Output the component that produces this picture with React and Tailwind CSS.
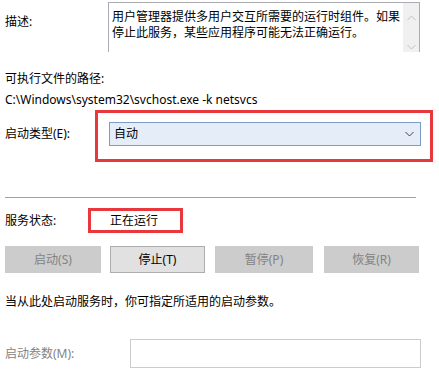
import React from "react";

const font = { fontFamily: '"Noto Sans", "Noto Sans CJK SC", sans-serif' };

function Chevron({ up, className }) {
  return (
    <svg width="9" height="6" viewBox="0 0 9 6" className={className}>
      <path
        d={up ? "M0.5 5 L4.5 1 L8.5 5" : "M0.5 1 L4.5 5 L8.5 1"}
        fill="none"
        stroke="currentColor"
        strokeWidth="1"
      />
    </svg>
  );
}

function Btn({ label, enabled, w, ml }) {
  return (
    <div
      className={`h-[27px] flex items-center justify-center border ${
        enabled
          ? "bg-[#e1e1e1] border-[#adadad] text-black"
          : "bg-[#cccccc] border-[#cccccc] text-[#838383]"
      } ${w} ${ml}`}
    >
      {label}
    </div>
  );
}

export default function App() {
  return (
    <div
      className="w-[439px] h-[373px] bg-white overflow-hidden text-[12px] leading-[16px] text-black flex flex-col"
      style={font}
    >
      {/* description */}
      <div className="flex pt-[2px] h-[52px]">
        <div className="w-[108px] pl-[5px] pt-[12px]">描述:</div>
        <div className="w-[312px] h-[50px] border-t border-l border-r border-[#abadb3] flex">
          <div className="flex-1 pl-[3px] pt-[6px] text-[12px] leading-[16px] tracking-[0px]">
            用户管理器提供多用户交互所需要的运行时组件。如果
            <br />
            停止此服务，某些应用程序可能无法正确运行。
          </div>
          <div className="w-[16px] bg-[#f0f0f0] flex flex-col items-center text-[#c2c2c2]">
            <Chevron up className="mt-[12px]" />
            <Chevron className="mt-[23px]" />
          </div>
        </div>
      </div>

      <div className="mt-[19px] pl-[5px]">可执行文件的路径:</div>
      <div className="mt-[5px] pl-[5px]">C:\Windows\system32\svchost.exe -k netsvcs</div>

      {/* startup type */}
      <div className="mt-[2px] flex">
        <div className="w-[95px] pl-[5px] pt-[16px]">启动类型(E):</div>
        <div className="w-[338px] h-[52px] border-[3px] border-[#e8383d]">
          <div className="ml-[11px] mt-[9px] w-[312px] h-[24px] bg-[#e5eef8] border border-[#7a9cc7] flex items-center justify-between pl-[4px] pr-[6px]">
            <span>自动</span>
            <Chevron className="text-[#444]" />
          </div>
        </div>
      </div>

      <div className="mt-[35px] ml-[5px] w-[411px] h-px bg-[#a0a0a0]" />

      {/* status */}
      <div className="mt-[10px] flex items-center">
        <div className="w-[88px] pl-[5px]">服务状态:</div>
        <div className="w-[95px] h-[25px] border-[3px] border-[#e8383d] flex items-center pl-[19px]">
          正在运行
        </div>
      </div>

      <div className="mt-[13px] flex">
        <Btn label="启动(S)" w="w-[96px]" ml="ml-[5px]" />
        <Btn label="停止(T)" enabled w="w-[95px]" ml="ml-[9px]" />
        <Btn label="暂停(P)" w="w-[98px]" ml="ml-[10px]" />
        <Btn label="恢复(R)" w="w-[95px]" ml="ml-[11px]" />
      </div>

      <div className="mt-[21px] pl-[5px]">当从此处启动服务时，你可指定所适用的启动参数。</div>

      <div className="mt-[29px] flex items-center">
        <div className="w-[130px] pl-[5px] text-[#838383]">启动参数(M):</div>
        <div className="w-[291px] h-[29px] border border-[#cccccc] bg-white" />
      </div>
    </div>
  );
}
